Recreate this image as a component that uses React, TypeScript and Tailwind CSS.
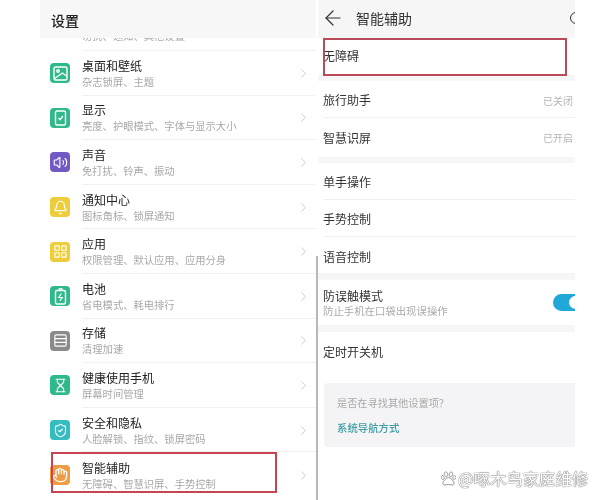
import { ArrowLeft, Bell, ChevronRight, Hand, Hourglass, LayoutGrid, Rows3, ShieldCheck, Volume2 } from "lucide-react";
import { FaPaw } from "react-icons/fa";
import type { ReactNode } from "react";

const font = { fontFamily: '"Noto Sans CJK SC", "Liberation Sans", sans-serif' };

type Row = { t: string; s: string; c: string; i: ReactNode };
const ic = { size: 15, strokeWidth: 1.8, color: "#fff" };

const Wallpaper = () => (
  <svg width="15" height="15" viewBox="0 0 15 15" fill="none" stroke="#fff" strokeWidth="1.4">
    <rect x="1" y="1" width="13" height="13" rx="1.5" />
    <circle cx="5" cy="5" r="1.2" />
    <path d="M1.5 12.5 9.5 7l4 3" />
  </svg>
);
const Display = () => (
  <svg width="15" height="16" viewBox="0 0 15 16" fill="none" stroke="#fff" strokeWidth="1.4">
    <rect x="2.5" y="1" width="10" height="14" rx="1.5" />
    <path d="m5.5 8 1.6 1.7L9.8 6" />
  </svg>
);
const Battery = () => (
  <svg width="15" height="17" viewBox="0 0 15 17" fill="none" stroke="#fff" strokeWidth="1.4">
    <path d="M5.5 1h4" strokeWidth="1.6" />
    <rect x="2.5" y="2.5" width="10" height="13.5" rx="1.5" />
    <path d="M8.3 5.5 5.8 9.5h3.4L6.8 13" strokeWidth="1.2" />
  </svg>
);

const rows: Row[] = [
  { t: "桌面和壁纸", s: "杂志锁屏、主题", c: "bg-[#2fb98a]", i: <Wallpaper /> },
  { t: "显示", s: "亮度、护眼模式、字体与显示大小", c: "bg-[#2fb98a]", i: <Display /> },
  { t: "声音", s: "免打扰、铃声、振动", c: "bg-[#7359c4]", i: <Volume2 {...ic} /> },
  { t: "通知中心", s: "图标角标、锁屏通知", c: "bg-[#eecd3c]", i: <Bell {...ic} /> },
  { t: "应用", s: "权限管理、默认应用、应用分身", c: "bg-[#eecd3c]", i: <LayoutGrid {...ic} /> },
  { t: "电池", s: "省电模式、耗电排行", c: "bg-[#2fb98a]", i: <Battery /> },
  { t: "存储", s: "清理加速", c: "bg-[#8a8a8a]", i: <Rows3 {...ic} /> },
  { t: "健康使用手机", s: "屏幕时间管理", c: "bg-[#2fb98a]", i: <Hourglass {...ic} /> },
  { t: "安全和隐私", s: "人脸解锁、指纹、锁屏密码", c: "bg-[#35bcc0]", i: <ShieldCheck {...ic} /> },
  { t: "智能辅助", s: "无障碍、智慧识屏、手势控制", c: "bg-[#ee9d45]", i: <Hand size={16} strokeWidth={1.8} color="#fff" /> },
];

function SettingRow({ r, last }: { r: Row; last: boolean }) {
  return (
    <div className="flex h-[44.6px] shrink-0 items-center">
      <div className={`ml-[10px] flex h-[20px] w-[20px] items-center justify-center rounded-[4px] ${r.c}`}>{r.i}</div>
      <div className={`ml-[12px] flex h-full flex-1 items-center justify-between pr-[5px] pt-[1px] ${last ? "" : "border-b border-[#f1f1f1]"}`}>
        <div className="flex flex-col">
          <span className="text-[12px] leading-[16px] text-[#222]">{r.t}</span>
          <span className="text-[10.3px] leading-[15px] text-[#a8a8a8]">{r.s}</span>
        </div>
        <ChevronRight size={15} strokeWidth={1.5} color="#c8c8c8" />
      </div>
    </div>
  );
}

function Item({ t, v, h, border }: { t: string; v?: string; h: string; border?: boolean }) {
  return (
    <div className={`ml-[5px] flex shrink-0 items-center justify-between pr-[2px] ${h} ${border ? "border-b border-[#f0f0f0] pt-[2px]" : ""}`}>
      <span className="text-[12px] text-[#333]">{t}</span>
      {v && <span className="text-[10px] text-[#b5b5b5]">{v}</span>}
    </div>
  );
}

const Band = ({ h }: { h: string }) => <div className={`shrink-0 bg-[#f6f6f7] ${h}`} />;

export default function App() {
  return (
    <div className="relative flex h-[500px] w-[600px] overflow-hidden bg-white pl-[40px] blur-[0.35px]" style={font}>
      <div className="flex h-full w-[276px] shrink-0 flex-col overflow-hidden">
        <div className="flex h-[38px] shrink-0 items-center bg-[#f7f7f7] pl-[11px] pt-[3px]">
          <span className="text-[14px] font-medium text-[#222]">设置</span>
        </div>
        <div className="ml-[42px] h-[13px] shrink-0 overflow-hidden border-b border-[#f1f1f1]">
          <div className="-mt-[10px] text-[10.3px] leading-[15px] text-[#a8a8a8]">勿扰、通知、其他设置</div>
        </div>
        {rows.map((r, i) => (
          <SettingRow key={r.t} r={r} last={i === rows.length - 1} />
        ))}
      </div>

      <div className="relative w-[2px] shrink-0">
        <div className="absolute bottom-0 left-0 top-[256px] w-[2px] bg-[#b8b8b8]" />
      </div>

      <div className="flex h-full w-[257px] shrink-0 flex-col overflow-hidden">
        <div className="flex h-[38px] shrink-0 items-center bg-[#f6f6f6] pb-[2px] pl-[3px]">
          <ArrowLeft size={24} strokeWidth={1.2} color="#333" />
          <span className="ml-[11px] text-[14px] text-[#333]">智能辅助</span>
          <div className="ml-auto mr-[-7px] h-[12px] w-[12px] rounded-full border-[1.5px] border-[#333]" />
        </div>
        <div className="ml-[5px] flex h-[37px] shrink-0 items-center pb-[2px]">
          <span className="text-[12px] text-[#333]">无障碍</span>
        </div>
        <Band h="h-[6px]" />
        <Item t="旅行助手" v="已关闭" h="h-[37px]" border />
        <Item t="智慧识屏" v="已开启" h="h-[39px]" />
        <Band h="h-[6px]" />
        <Item t="单手操作" h="h-[37px]" border />
        <Item t="手势控制" h="h-[37px]" border />
        <div className="ml-[5px] flex h-[36px] shrink-0 items-center pt-[3px]">
          <span className="text-[12px] text-[#333]">语音控制</span>
        </div>
        <Band h="h-[7px]" />
        <div className="ml-[5px] flex h-[45px] shrink-0 items-center justify-between">
          <div className="flex flex-col">
            <span className="text-[12px] leading-[15px] pt-[1px] text-[#333]">防误触模式</span>
            <span className="text-[10.4px] leading-[15px] text-[#aaa]">防止手机在口袋出现误操作</span>
          </div>
          <div className="mr-[-12px] flex h-[17px] w-[34px] items-center justify-end rounded-full bg-[#1fa8d8] pr-[5px]">
            <div className="h-[13px] w-[13px] rounded-full bg-white" />
          </div>
        </div>
        <Band h="h-[7px]" />
        <Item t="定时开关机" h="h-[39px]" />
        <div className="ml-[6px] mt-[12px] flex h-[64px] shrink-0 flex-col justify-center gap-[10px] rounded-l-[4px] bg-[#f4f4f6] pl-[13px]">
          <span className="text-[10.2px] leading-[15px] text-[#a8a8a8]">是否在寻找其他设置项？</span>
          <span className="text-[10.4px] font-medium leading-[15px] text-[#3f9da3]">系统导航方式</span>
        </div>
      </div>

      {/* 红框标注 */}
      <div className="absolute left-[51px] top-[452px] h-[41px] w-[226px] border-2 border-[#c84452]" />
      <div className="absolute left-[323px] top-[38px] h-[38px] w-[244px] border-2 border-[#b84a5a]" />

      {/* 水印 */}
      <div className="absolute left-[441px] top-[468px] flex items-center gap-[2px] text-[16.4px] leading-[20px] text-white [text-shadow:0_0_1px_#777,0_0_1px_#777,0_0_1px_#777]">
        <FaPaw size={15} color="#fff" stroke="#888" strokeWidth={30} />
        <span>@啄木鸟家庭维修</span>
      </div>
    </div>
  );
}
